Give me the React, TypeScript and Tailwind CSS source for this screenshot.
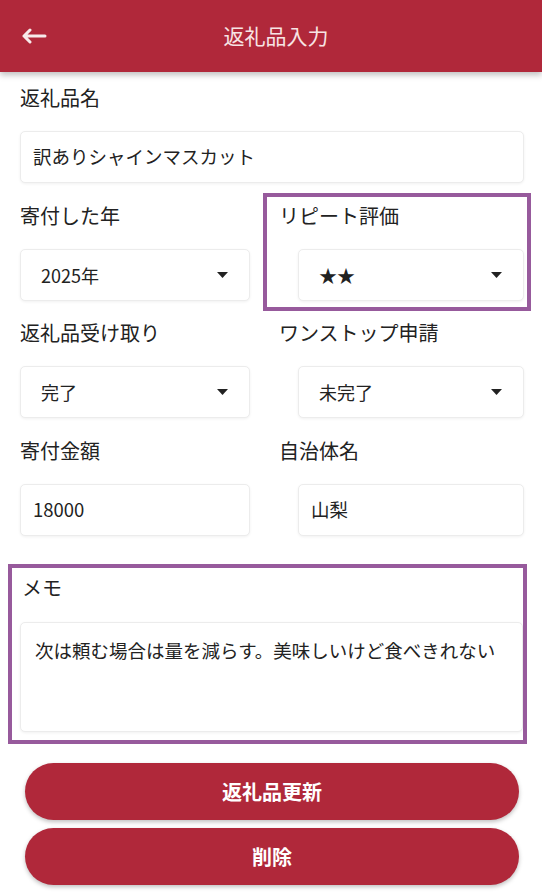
import React from 'react';

const font = { fontFamily: '"Noto Sans CJK JP", "Noto Sans", sans-serif' };

function Caret() {
  return (
    <svg width="11" height="6" viewBox="0 0 11 6" className="shrink-0">
      <path d="M0 0 L11 0 L5.5 6 Z" fill="#222" />
    </svg>
  );
}

function Field({ value }: { value: string }) {
  return (
    <div className="h-[52px] flex items-center pl-[12px] bg-white border border-[#ececec] rounded-[5px] shadow-[0_1px_3px_rgba(0,0,0,0.06)] text-[18.5px] text-[#222]">
      {value}
    </div>
  );
}

function SelectBox({ value }: { value: string }) {
  return (
    <div className="h-[52px] flex items-center justify-between pl-[20px] pr-[21px] bg-white border border-[#ececec] rounded-[5px] shadow-[0_1px_3px_rgba(0,0,0,0.06)] text-[18px] text-[#222]">
      <span>{value}</span>
      <Caret />
    </div>
  );
}

function Label({ text, className = '' }: { text: string; className?: string }) {
  return <div className={`h-[28px] leading-[28px] text-[20px] text-[#222] ${className}`}>{text}</div>;
}

function LeftCell({ label, children }: { label: string; children: React.ReactNode }) {
  return (
    <div className="w-[238px] border-4 border-transparent pt-[5px] pb-[6px]">
      <Label text={label} />
      <div className="mt-[19px]">{children}</div>
    </div>
  );
}

function RightCell({ label, highlight, children }: { label: string; highlight?: boolean; children: React.ReactNode }) {
  return (
    <div
      className={`ml-[9px] w-[268px] border-4 pt-[5px] pb-[6px] ${
        highlight ? 'border-[#975a9c]' : 'border-transparent'
      }`}
    >
      <Label text={label} className="pl-[12px]" />
      <div className="mt-[19px] ml-[31px] mr-[3px]">{children}</div>
    </div>
  );
}

export default function App() {
  return (
    <div className="w-[542px] h-[895px] bg-white overflow-hidden" style={font}>
      {/* Header */}
      <div className="relative z-10 h-[72px] bg-[#b0283a] flex items-center shadow-[0_3px_6px_rgba(0,0,0,0.25)]">
        <svg width="26" height="16" viewBox="0 0 26 16" className="ml-[21px]">
          <path d="M24 8 H3 M9 2 L3 8 L9 14" stroke="#f7eaea" strokeWidth="3" fill="none" strokeLinecap="round" strokeLinejoin="round" />
        </svg>
        <div className="flex-1 text-center text-[21px] text-[#f7e4e4] pr-[37px]">返礼品入力</div>
      </div>

      <div className="pl-[16px] mt-[3px]">
        {/* 返礼品名 */}
        <div className="w-[512px] border-4 border-transparent pt-[5px] pb-[6px]">
          <Label text="返礼品名" />
          <div className="mt-[19px]">
            <Field value="訳ありシャインマスカット" />
          </div>
        </div>

        <div className="flex">
          <LeftCell label="寄付した年">
            <SelectBox value="2025年" />
          </LeftCell>
          <RightCell label="リピート評価" highlight>
            <SelectBox value="★★" />
          </RightCell>
        </div>

        <div className="flex -mt-px">
          <LeftCell label="返礼品受け取り">
            <SelectBox value="完了" />
          </LeftCell>
          <RightCell label="ワンストップ申請">
            <SelectBox value="未完了" />
          </RightCell>
        </div>

        <div className="flex">
          <LeftCell label="寄付金額">
            <Field value="18000" />
          </LeftCell>
          <RightCell label="自治体名">
            <Field value="山梨" />
          </RightCell>
        </div>
      </div>

      {/* メモ */}
      <div className="ml-[8px] mt-[18px] w-[519px] border-4 border-[#975a9c] pt-[6px] pb-[8px] overflow-hidden">
        <Label text="メモ" className="pl-[10px]" />
        <div className="mt-[20px] ml-[8px] h-[110px] bg-white border border-[#ececec] rounded-[5px] shadow-[0_1px_3px_rgba(0,0,0,0.06)] pl-[14px] pt-[14px] text-[18.5px] text-[#222]">
          次は頼む場合は量を減らす。美味しいけど食べきれない
        </div>
      </div>

      {/* Buttons */}
      <div className="mt-[19px] ml-[25px] w-[494px] flex flex-col gap-[8px]">
        <button className="h-[57px] rounded-full bg-[#b0283a] text-white text-[20px] font-bold shadow-[0_2px_4px_rgba(0,0,0,0.25)]">
          返礼品更新
        </button>
        <button className="h-[57px] rounded-full bg-[#b0283a] text-white text-[20px] font-bold shadow-[0_2px_4px_rgba(0,0,0,0.25)]">
          削除
        </button>
      </div>
    </div>
  );
}
